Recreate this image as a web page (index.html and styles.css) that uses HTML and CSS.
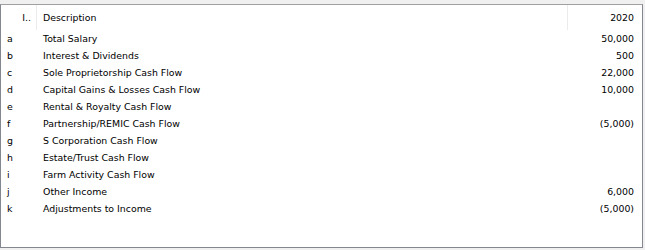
FILE: index.html
```html
<!DOCTYPE html>
<html>
<head>
<meta charset="utf-8">
<link rel="stylesheet" href="styles.css">
</head>
<body>
<div class="frame">
  <div class="grid">
    <div class="hd c1">I..</div>
    <div class="hd c2">Description</div>
    <div class="hd c3">2020</div>

    <div class="c1">a</div><div class="c2">Total Salary</div><div class="c3">50,000</div>
    <div class="c1">b</div><div class="c2">Interest &amp; Dividends</div><div class="c3">500</div>
    <div class="c1">c</div><div class="c2">Sole Proprietorship Cash Flow</div><div class="c3">22,000</div>
    <div class="c1">d</div><div class="c2">Capital Gains &amp; Losses Cash Flow</div><div class="c3">10,000</div>
    <div class="c1">e</div><div class="c2">Rental &amp; Royalty Cash Flow</div><div class="c3"></div>
    <div class="c1">f</div><div class="c2">Partnership/REMIC Cash Flow</div><div class="c3">(5,000)</div>
    <div class="c1">g</div><div class="c2">S Corporation Cash Flow</div><div class="c3"></div>
    <div class="c1">h</div><div class="c2">Estate/Trust Cash Flow</div><div class="c3"></div>
    <div class="c1">i</div><div class="c2">Farm Activity Cash Flow</div><div class="c3"></div>
    <div class="c1">j</div><div class="c2">Other Income</div><div class="c3">6,000</div>
    <div class="c1">k</div><div class="c2">Adjustments to Income</div><div class="c3">(5,000)</div>
  </div>
</div>
</body>
</html>
```
FILE: styles.css
```css
html, body {
  margin: 0;
  padding: 0;
  background: #f0f0f0;
}
body {
  padding-top: 4px;
  font-family: "DejaVu Sans", sans-serif;
  font-size: 9.4px;
  color: #000;
}
.frame {
  width: 641px;
  height: 242px;
  background: #fff;
  border: 1px solid #828790;
  border-top-color: #a0a0a0;
}
.grid {
  display: grid;
  grid-template-columns: 36px 531px 74px;
  grid-auto-rows: 17px;
  grid-template-rows: 25px;
}
.grid > div {
  line-height: 17px;
  white-space: nowrap;
  overflow: hidden;
}
.hd {
  line-height: 26px !important;
  border-right: 1px solid #ebebeb;
}
.c1 { padding-left: 6px; }
.hd.c1 { text-align: right; padding-right: 5px; padding-left: 0; }
.c2 { padding-left: 6px; }
.c3 { text-align: right; padding-right: 8px; }
.hd.c3 { border-right: none; }
```
